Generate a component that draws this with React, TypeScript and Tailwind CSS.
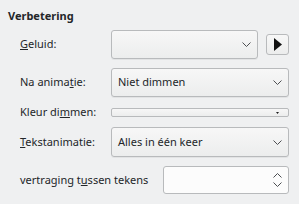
const Chevron = ({ up = false }: { up?: boolean }) => (
  <svg width="9" height="5" viewBox="0 0 9 5" className="shrink-0">
    <path
      d={up ? 'M0.5 4.5 L4.5 0.5 L8.5 4.5' : 'M0.5 0.5 L4.5 4.5 L8.5 0.5'}
      fill="none"
      stroke="#4d4f52"
      strokeWidth="1"
    />
  </svg>
);

const Combo = ({ text, className = '' }: { text?: string; className?: string }) => (
  <div
    className={`flex items-center justify-between rounded-[3px] border border-[#b8babc] bg-gradient-to-b from-[#f7f7f7] to-[#eceded] pl-[6px] pr-[6px] shadow-[0_1px_0_rgba(0,0,0,0.05)] ${className}`}
  >
    <span>{text}</span>
    <Chevron />
  </div>
);

const Row = ({ label, children, className = '' }: { label: React.ReactNode; children: React.ReactNode; className?: string }) => (
  <div className={`flex items-center ${className}`}>
    <div className="w-[91px] shrink-0">{label}</div>
    {children}
  </div>
);

export default function App() {
  return (
    <div
      className="h-[204px] w-[299px] bg-[#eff0f1] text-[11px] text-[#232629]"
      style={{ fontFamily: '"Noto Sans", sans-serif' }}
    >
      <div className="pl-[8px] pt-[8px] text-[11px] font-bold leading-[16px]">Verbetering</div>
      <div className="flex flex-col pl-[20px] pr-[10px]">
        <Row label={<span><u>G</u>eluid:</span>} className="mt-[6px] h-[29px]">
          <Combo className="h-[29px] w-[147px]" />
          <div className="ml-[8px] flex h-[21px] w-[23px] items-center justify-center rounded-[3px] border border-[#b8babc] bg-gradient-to-b from-[#f7f7f7] to-[#eceded]">
            <svg width="8" height="13" viewBox="0 0 8 13">
              <path d="M0 0 L8 6.5 L0 13 Z" fill="#111" />
            </svg>
          </div>
        </Row>
        <Row label={<span>Na anima<u>t</u>ie:</span>} className="mt-[9px] h-[29px]">
          <Combo text="Niet dimmen" className="h-[29px] flex-1" />
        </Row>
        <Row label={<span>Kleur di<u>m</u>men:</span>} className="mt-[11px] h-[9px]">
          <div className="flex h-[9px] flex-1 items-center justify-end rounded-[2px] border border-[#b8babc] bg-gradient-to-b from-[#f7f7f7] to-[#eceded] pr-[9px]">
            <svg width="3" height="2" viewBox="0 0 3 2">
              <path d="M0 0 L3 0 L1.5 2 Z" fill="#222" />
            </svg>
          </div>
        </Row>
        <Row label={<span><u>T</u>ekstanimatie:</span>} className="mt-[10px] h-[30px]">
          <Combo text="Alles in één keer" className="h-[30px] flex-1" />
        </Row>
        <div className="mt-[9px] flex h-[28px] items-center">
          <div className="w-[143px] shrink-0">
            vertraging t<u>u</u>ssen tekens
          </div>
          <div className="flex h-[28px] flex-1 items-center justify-end rounded-[3px] border border-[#b8babc] bg-[#fcfcfc] pr-[6px]">
            <div className="flex flex-col gap-[4px]">
              <Chevron up />
              <Chevron />
            </div>
          </div>
        </div>
      </div>
    </div>
  );
}
